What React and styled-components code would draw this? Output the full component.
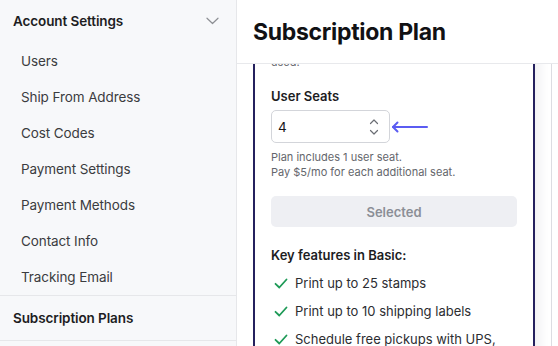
import React from 'react';
import styled, { createGlobalStyle } from 'styled-components';

const GlobalStyle = createGlobalStyle`
    html, body {
        margin: 0;
        padding: 0;
        background: #ffffff;
        font-family: Inter, "Noto Sans", sans-serif;
        color: #1d1d1f;
        -webkit-font-smoothing: antialiased;
    }
    * { box-sizing: border-box; }
`;

const accountLinks = [
    'Users',
    'Ship From Address',
    'Cost Codes',
    'Payment Settings',
    'Payment Methods',
    'Contact Info',
    'Tracking Email',
];

const features = [
    'Print up to 25 stamps',
    'Print up to 10 shipping labels',
    'Schedule free pickups with UPS,',
];

const ChevronDown = () => (
    <svg width="13" height="8" viewBox="0 0 13 8" fill="none">
        <path d="M1 1.2l5.5 5.3L12 1.2" stroke="#8d8f94" strokeWidth="1.2" strokeLinecap="round" strokeLinejoin="round" />
    </svg>
);

const Spinner = () => (
    <svg width="10" height="20" viewBox="0 0 10 20" fill="none">
        <path d="M1.5 6.5L5 3l3.5 3.5" stroke="#6b6e74" strokeWidth="1.2" strokeLinecap="round" strokeLinejoin="round" />
        <path d="M1.5 13.5L5 17l3.5-3.5" stroke="#6b6e74" strokeWidth="1.2" strokeLinecap="round" strokeLinejoin="round" />
    </svg>
);

const PointerArrow = () => (
    <svg width="40" height="12" viewBox="0 0 40 12" fill="none">
        <path d="M37 6H3" stroke="#5b5cf2" strokeWidth="2" strokeLinecap="round" />
        <path d="M7.5 1.5L3 6l4.5 4.5" stroke="#5b5cf2" strokeWidth="2" strokeLinecap="round" strokeLinejoin="round" />
    </svg>
);

const Check = () => (
    <svg width="14" height="11" viewBox="0 0 14 11" fill="none">
        <path d="M1.5 5.8l3.8 3.7L12.5 1.5" stroke="#1e9a57" strokeWidth="1.8" strokeLinecap="round" strokeLinejoin="round" />
    </svg>
);

const App = () => {
    return (
        <Page>
            <GlobalStyle />
            <Sidebar>
                <GroupHeader>
                    <GroupTitle>Account Settings</GroupTitle>
                    <ChevronDown />
                </GroupHeader>
                <LinkList>
                    {accountLinks.map((link) => (
                        <SideLink key={link}>{link}</SideLink>
                    ))}
                </LinkList>
                <SectionLink>Subscription Plans</SectionLink>
            </Sidebar>
            <Main>
                <Header>
                    <Title>Subscription Plan</Title>
                </Header>
                <Scroller>
                    <CardTrack>
                        <PlanCard selected>
                            <Description>used.</Description>
                            <FieldLabel>User Seats</FieldLabel>
                            <FieldRow>
                                <NumberBox>
                                    <NumberValue>4</NumberValue>
                                    <Spinner />
                                </NumberBox>
                                <PointerArrow />
                            </FieldRow>
                            <Hint>
                                Plan includes 1 user seat.
                                <br />
                                Pay $5/mo for each additional seat.
                            </Hint>
                            <SelectedButton disabled>Selected</SelectedButton>
                            <FeaturesTitle>Key features in Basic:</FeaturesTitle>
                            <FeatureList>
                                {features.map((feature) => (
                                    <Feature key={feature}>
                                        <CheckWrap>
                                            <Check />
                                        </CheckWrap>
                                        {feature}
                                    </Feature>
                                ))}
                            </FeatureList>
                        </PlanCard>
                        <PlanCard />
                    </CardTrack>
                </Scroller>
            </Main>
        </Page>
    );
};

const Page = styled.div`
    display: flex;
    width: 558px;
    height: 346px;
    overflow: hidden;
`;

const Sidebar = styled.nav`
    width: 237px;
    flex-shrink: 0;
    background: #f7f8fa;
    border-right: 1px solid #e6e7ea;
    display: flex;
    flex-direction: column;
`;

const GroupHeader = styled.div`
    display: flex;
    align-items: center;
    justify-content: space-between;
    height: 42px;
    padding: 0 17px 0 13px;
`;

const GroupTitle = styled.div`
    font-weight: 600;
    font-size: 13.5px;
    letter-spacing: -0.1px;
`;

const LinkList = styled.div`
    display: flex;
    flex-direction: column;
    padding-top: 1px;
`;

const SideLink = styled.div`
    height: 36px;
    line-height: 36px;
    padding-left: 21px;
    font-size: 13.5px;
    color: #3b3c40;
    letter-spacing: -0.1px;
`;

const SectionLink = styled.div`
    height: 46px;
    display: flex;
    align-items: center;
    padding-left: 13px;
    font-weight: 600;
    font-size: 13.5px;
    letter-spacing: -0.1px;
    border-top: 1px solid #e6e7ea;
    border-bottom: 1px solid #e6e7ea;
`;

const Main = styled.main`
    flex: 1;
    display: flex;
    flex-direction: column;
    min-width: 0;
    background: #ffffff;
`;

const Header = styled.header`
    height: 64px;
    flex-shrink: 0;
    display: flex;
    align-items: center;
    padding-left: 16px;
    border-bottom: 1px solid #e8e9ec;
`;

const Title = styled.h1`
    margin: 0;
    font-size: 23px;
    font-weight: 700;
    letter-spacing: -0.3px;
    color: #111114;
`;

const Scroller = styled.div`
    flex: 1;
    overflow: hidden;
    padding-left: 16px;
`;

const CardTrack = styled.div`
    display: flex;
    gap: 16px;
    margin-top: -23px;
`;

const PlanCard = styled.section`
    width: 282px;
    flex-shrink: 0;
    padding: 12px 16px 20px;
    border: ${(p) => (p.selected ? '2px solid #25215e' : '1px solid #dcdde2')};
    border-radius: 8px;
    background: #ffffff;
    box-shadow: ${(p) => (p.selected ? '6px 0 10px rgba(30, 30, 60, 0.06)' : 'none')};
    min-height: 420px;
`;

const Description = styled.p`
    margin: 0 0 18px;
    font-size: 11px;
    line-height: 15px;
    color: #66686e;
`;

const FieldLabel = styled.div`
    font-weight: 600;
    font-size: 13px;
    margin-bottom: 6px;
`;

const FieldRow = styled.div`
    display: flex;
    align-items: center;
`;

const NumberBox = styled.div`
    width: 119px;
    height: 33px;
    border: 1px solid #d3d5da;
    border-radius: 5px;
    display: flex;
    align-items: center;
    justify-content: space-between;
    padding: 0 10px 0 6px;
`;

const NumberValue = styled.span`
    font-size: 13.5px;
    color: #151518;
`;

const Hint = styled.div`
    margin-top: 7px;
    font-size: 11px;
    line-height: 15px;
    color: #64666c;
`;

const SelectedButton = styled.button`
    display: block;
    width: 100%;
    height: 31px;
    margin-top: 16px;
    border: none;
    border-radius: 5px;
    background: #eeeff3;
    color: #8b8e96;
    font-family: inherit;
    font-weight: 600;
    font-size: 13px;
`;

const FeaturesTitle = styled.div`
    margin-top: 20px;
    font-weight: 600;
    font-size: 13px;
`;

const FeatureList = styled.ul`
    list-style: none;
    margin: 11px 0 0;
    padding: 0;
    display: flex;
    flex-direction: column;
    gap: 10px;
`;

const Feature = styled.li`
    display: flex;
    align-items: center;
    font-size: 13px;
    line-height: 18px;
    color: #2c2d31;
`;

const CheckWrap = styled.span`
    display: inline-flex;
    width: 24px;
    padding-left: 3px;
`;

export default App;
